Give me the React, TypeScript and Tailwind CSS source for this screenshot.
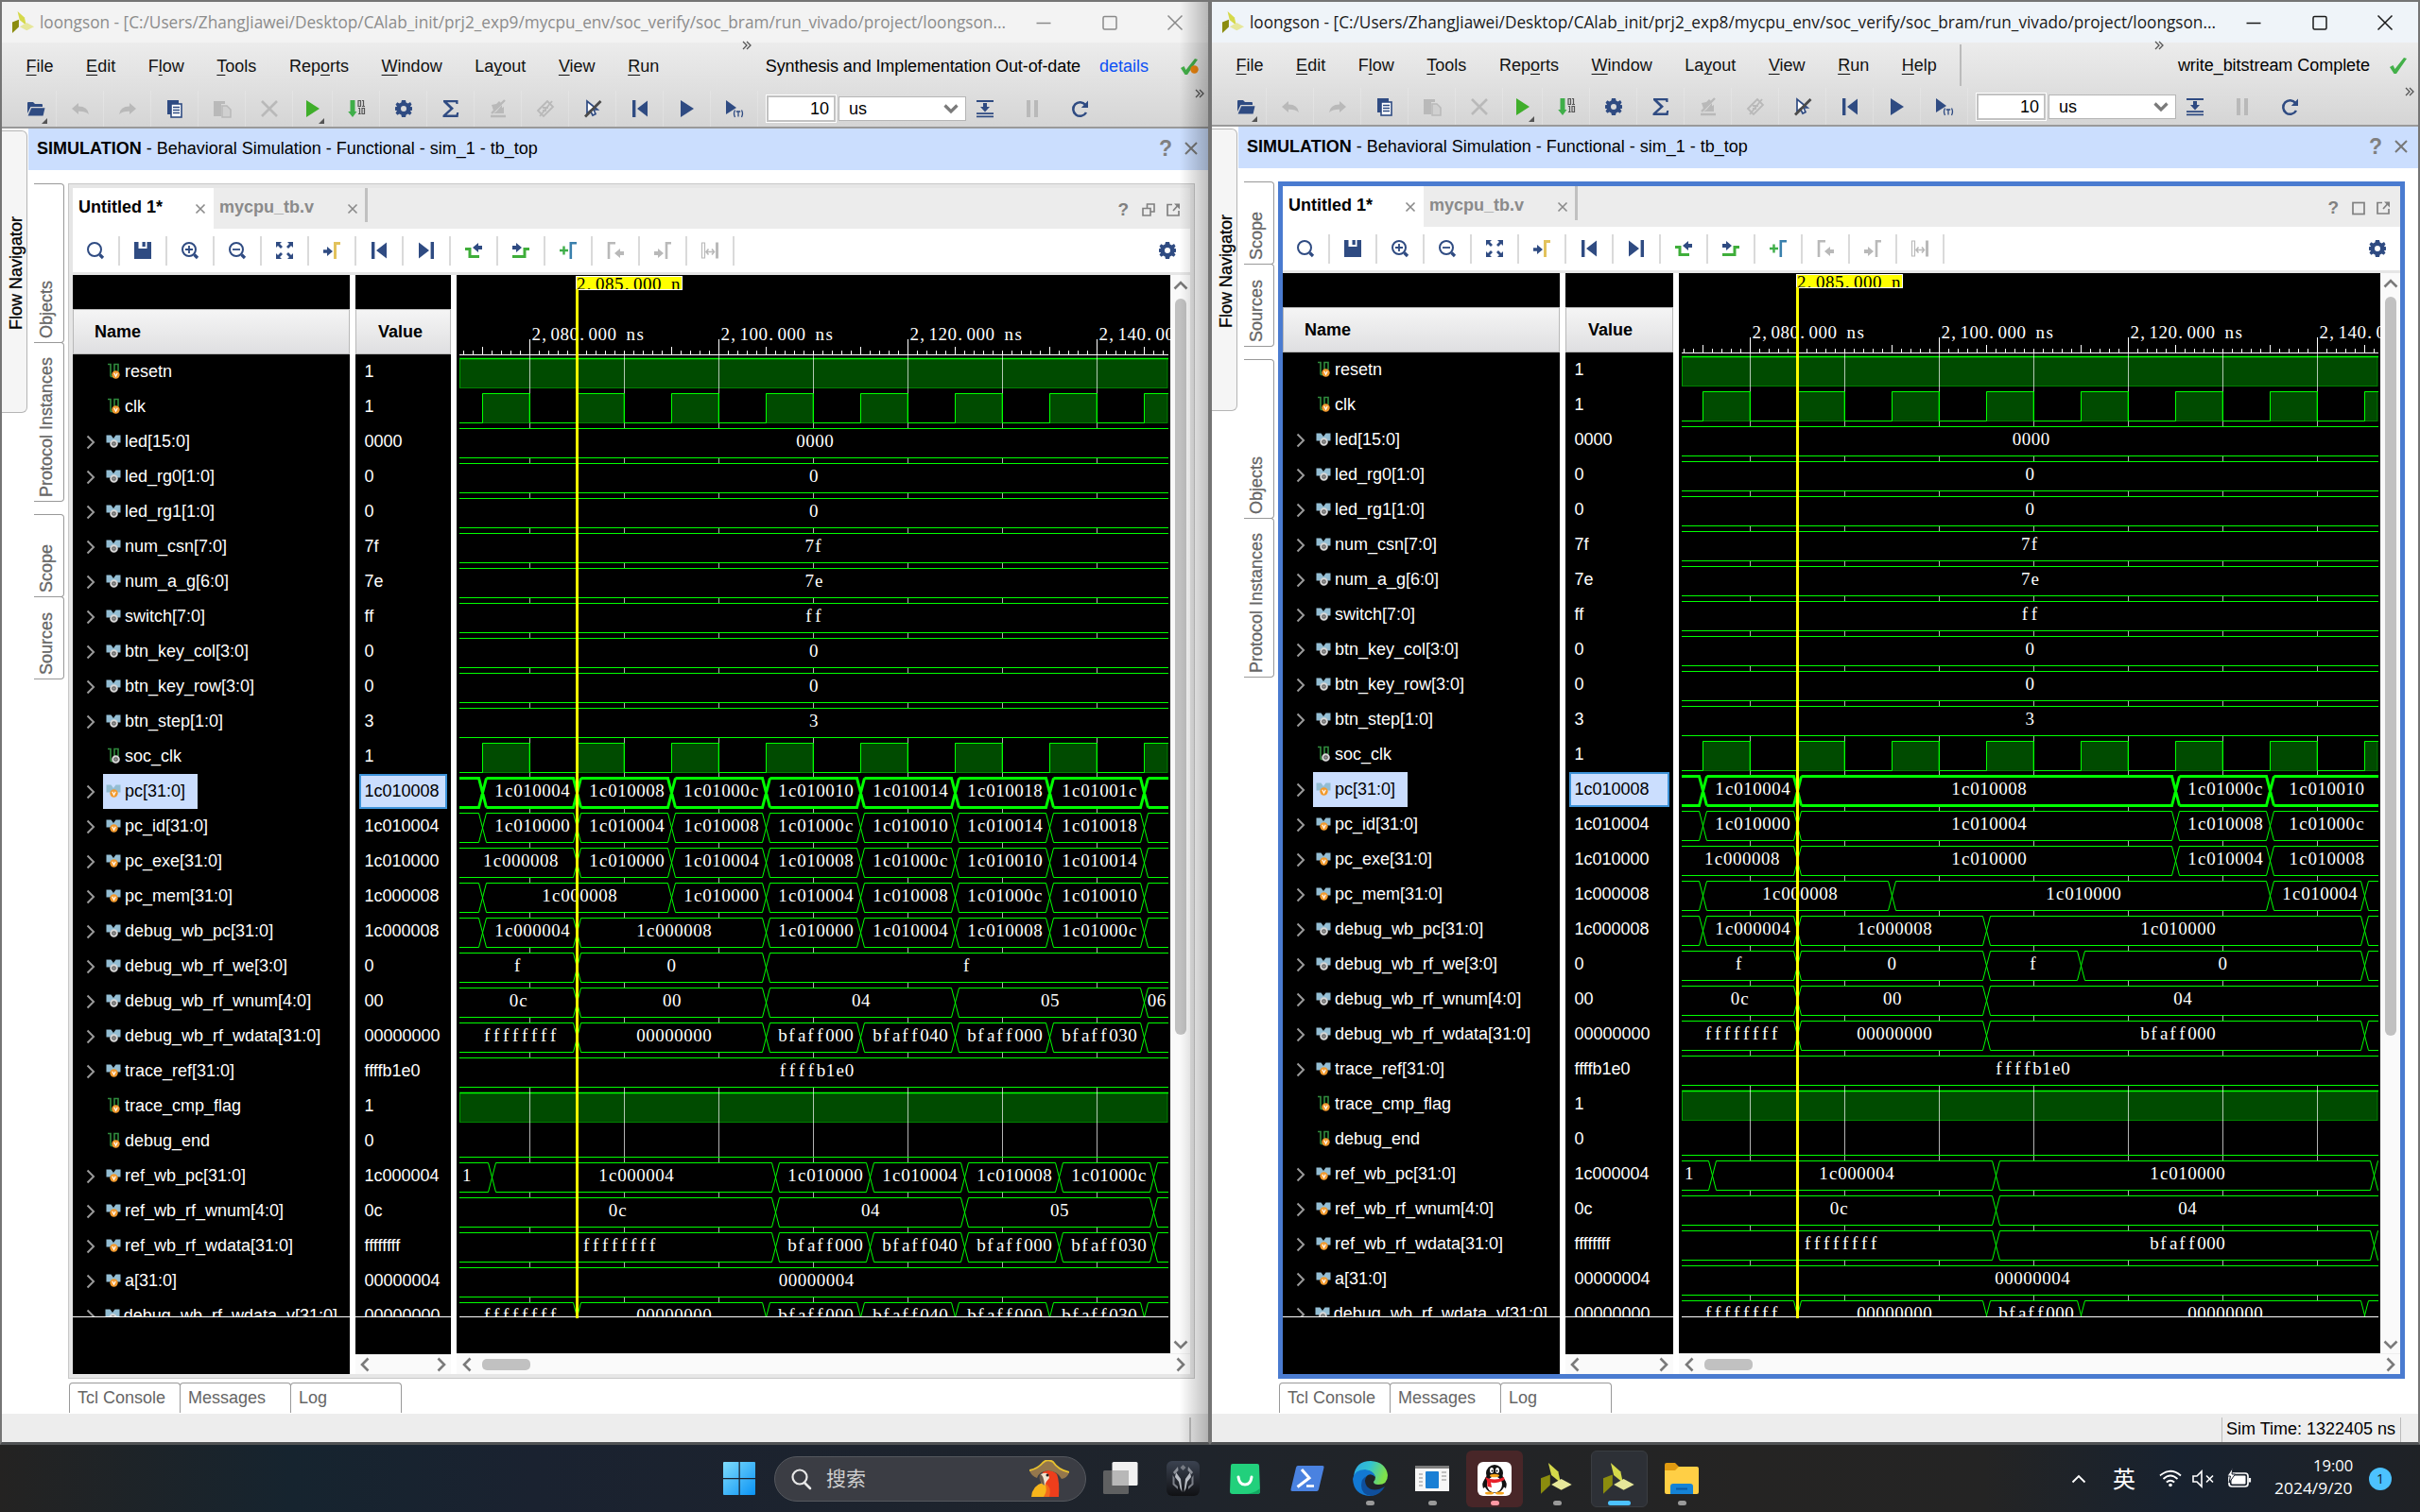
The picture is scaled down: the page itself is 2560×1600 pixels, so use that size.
import React, { useLayoutEffect, useRef, useState } from "react";

const NAVY = "#2f4b82";
const GREY = "#b9b9b9";

/* ---------- text squeezed or stretched to a given width ---------- */

function Fit({ width, className, children }: { width: number; className?: string; children: React.ReactNode }) {
  const ref = useRef<HTMLSpanElement>(null);
  const [scale, setScale] = useState(1);
  useLayoutEffect(() => {
    if (ref.current) setScale(width / ref.current.offsetWidth);
  }, [width]);
  return (
    <span className="block" style={{ width }}>
      <span
        ref={ref}
        className={"inline-block origin-left whitespace-nowrap " + (className ?? "")}
        style={{ transform: `scaleX(${scale})` }}
      >
        {children}
      </span>
    </span>
  );
}

/* ---------- icons ---------- */

function Ico({ children, w = 28, h = 28 }: { children: React.ReactNode; w?: number; h?: number }) {
  return (
    <svg width={w} height={h} viewBox={`${-w / 2} ${-h / 2} ${w} ${h}`} className="block shrink-0 overflow-visible">
      {children}
    </svg>
  );
}

const gearPath =
  "M-2 -9H2L2.6 -6.4L4.6 -5.5L7 -7L8.5 -4.6L6.9 -2.2L9 -1.8V1.8L6.9 2.2L8.5 4.6L6.6 6.8L4.6 5.5L2.6 6.4L2 9H-2L-2.6 6.4L-4.6 5.5L-6.6 6.8L-8.5 4.6L-6.9 2.2L-9 1.8V-1.8L-6.9 -2.2L-8.5 -4.6L-6.6 -6.8L-4.6 -5.5L-2.6 -6.4Z";
const Gear = () => (
  <Ico>
    <path d={gearPath + "M3 0A3 3 0 1 0 -3 0A3 3 0 1 0 3 0Z"} fill={NAVY} fillRule="evenodd" />
  </Ico>
);
const FolderOpen = () => (
  <Ico>
    <path d="M-9 5V-6Q-9 -7 -8 -7H-3L-1 -5H6Q7 -5 7 -4V-2H-5.5Z" fill={NAVY} />
    <path d="M-4.8 -.8H9.5L7.6 7.5H-8.4Z" fill={NAVY} />
    <path d="M12 10V16H6Z" fill="#555" />
  </Ico>
);
const Undo = ({ flip }: { flip?: boolean }) => (
  <Ico>
    <path transform={flip ? "scale(-1 1)" : undefined} d="M-9 0L-2 -6V-2.6Q8 -2.6 9 6Q5 2.6 -2 2.8V6Z" fill={GREY} />
  </Ico>
);
const Copy = () => (
  <Ico>
    <path d="M-8 -9H4V6H-8Z" fill={NAVY} />
    <rect x="-4" y="-5" width="11" height="14" fill="#fff" stroke={NAVY} strokeWidth="1.6" />
    <path d="M-2 -1.5H5M-2 1.5H5M-2 4.5H5" stroke={NAVY} strokeWidth="1.4" />
  </Ico>
);
const Paste = () => (
  <Ico>
    <path d="M-9 -8H3V-5H-1V8H-9Z" fill={GREY} />
    <path d="M0 -3H5L9 1V9H0Z" fill="#d0d0d0" stroke={GREY} strokeWidth="1.5" />
  </Ico>
);
const Cross = () => (
  <Ico>
    <path d="M-8 -8L8 8M8 -8L-8 8" stroke={GREY} strokeWidth="2.6" />
  </Ico>
);
const RunGreen = () => (
  <Ico>
    <path d="M-7 -9L7 0L-7 9Z" fill="#3fae2a" />
    <path d="M12 10V16H6Z" fill="#555" />
  </Ico>
);
const Bits = () => (
  <Ico>
    <path d="M-6.5 -9H-1.5V3H.5L-4 9L-8.8 3H-6.5Z" fill="#3fae49" />
    <path d="M2 -8.5H4.5V-2.5H2ZM6 -8.5H7.5V-2.5M6 -2.5H9M2 -.5H3.5V5.5M2 5.5H4.7M6 -.5H8.5V5.5H6Z" fill="none" stroke="#555" strokeWidth="1.2" />
  </Ico>
);
const Sigma = () => (
  <Ico>
    <path d="M-8 -9H7.5V-5H5.5L5 -6.8H-3.8L3 -.3L-4.5 6.4H5.5L6.2 4H8.2L7.6 9H-8.5V7L-.8 0L-8 -7Z" fill={NAVY} />
  </Ico>
);
const EraseA = () => (
  <Ico>
    <path d="M-7 -4L-2 -5L1 -8L3 -6L-1 -2L-5 2ZM-1 2L4 -4V4H-2Z" fill={GREY} />
    <path d="M-8 8H8M-7 5L7 -9" stroke={GREY} strokeWidth="2.4" />
    <path d="M-5 5L6 -2V5Z" fill={GREY} />
  </Ico>
);
const EraseB = () => (
  <Ico>
    <path d="M-8 2L2 -8L8 -2L-2 8Z" fill="none" stroke={GREY} strokeWidth="1.8" />
    <path d="M-6 8L7 -8M-3 -1H3M-3 2H1" stroke={GREY} strokeWidth="1.8" />
  </Ico>
);
const NoPointer = () => (
  <Ico>
    <path d="M-6 -8V5L-2.5 2L0 7L3 5.5L1 1H5Z" fill="#fff" stroke={NAVY} strokeWidth="1.7" />
    <path d="M-8 8.5L8.5 -8" stroke="#4a4a4a" strokeWidth="2.8" />
  </Ico>
);
const ToStart = () => (
  <Ico>
    <path d="M-8 -9H-4.6V9H-8ZM8 -8.5V8.5L-3 0Z" fill={NAVY} />
  </Ico>
);
const ToEnd = () => (
  <Ico>
    <path d="M8 -9H4.6V9H8ZM-8 -8.5V8.5L3 0Z" fill={NAVY} />
  </Ico>
);
const Play = () => (
  <Ico>
    <path d="M-7 -9L7 0L-7 9Z" fill={NAVY} />
  </Ico>
);
const PlayT = () => (
  <Ico>
    <path d="M-9 -9L2 -1L-9 6Z" fill={NAVY} />
    <path d="M.5 1.5Q-1.5 5 .5 9M7.5 1.5Q9.5 5 7.5 9M1.8 3H6.2M4 3V8.5" fill="none" stroke={NAVY} strokeWidth="1.3" />
  </Ico>
);
const RunFor = () => (
  <Ico>
    <path d="M-9 -8H9" stroke={NAVY} strokeWidth="2" />
    <path d="M-2 -6H2V-2H5L0 3.5L-5 -2H-2Z" fill={NAVY} />
    <path d="M-9 5.2H9M-9 8.4H9" stroke={NAVY} strokeWidth="1.8" />
  </Ico>
);
const Pause = () => (
  <Ico>
    <path d="M-6 -9H-2V9H-6ZM2 -9H6V9H2Z" fill={GREY} />
  </Ico>
);
const Refresh = () => (
  <Ico>
    <path d="M6.3 -4A7.3 7.3 0 1 0 7 4" fill="none" stroke={NAVY} strokeWidth="2.5" />
    <path d="M9 -8.5V-1H1.8Z" fill={NAVY} />
  </Ico>
);
const Mag = ({ sign }: { sign?: "+" | "-" }) => (
  <Ico>
    <circle cx="-1" cy="-1" r="7" fill="none" stroke={NAVY} strokeWidth="2" />
    <path d="M4.5 4.5L8 8" stroke={NAVY} strokeWidth="3.2" />
    {sign && <path d={sign === "+" ? "M-5 -1H3M-1 -5V3" : "M-5 -1H3"} stroke={NAVY} strokeWidth="1.8" />}
  </Ico>
);
const Save = () => (
  <Ico>
    <path d="M-9 -9H-4.5V-2H4.5V-9H9V9H-9Z" fill={NAVY} />
    <path d="M-.5 -9H2.8V-4H-.5Z" fill={NAVY} />
  </Ico>
);
const ZoomFit = () => (
  <Ico>
    <path
      d="M-9 -9H-3L-5 -7L-2 -4L-4 -2L-7 -5L-9 -3ZM9 -9V-3L7 -5L4 -2L2 -4L5 -7L3 -9ZM-9 9V3L-7 5L-4 2L-2 4L-5 7L-3 9ZM9 9H3L5 7L2 4L4 2L7 5L9 3Z"
      fill={NAVY}
    />
  </Ico>
);
const GoCursor = () => (
  <Ico>
    <path d="M-9 -.8H-5V-4L1 1L-5 6V2.8H-9Z" fill={NAVY} />
    <path d="M3.5 9V-7.5H9" fill="none" stroke="#e2c25c" strokeWidth="3" />
  </Ico>
);
const PrevEdge = () => (
  <Ico>
    <path d="M-9 -1.5H-4V6.5H6" fill="none" stroke="#3fae3a" strokeWidth="3" />
    <path d="M9 -5H5V-8L-1 -3L5 2V-1H9Z" fill={NAVY} />
  </Ico>
);
const NextEdge = () => (
  <Ico>
    <path d="M-9 6.5H4V-1.5H9" fill="none" stroke="#3fae3a" strokeWidth="3" />
    <path d="M-9 -5H-5V-8L1 -3L-5 2V-1H-9Z" fill={NAVY} />
  </Ico>
);
const AddMarker = () => (
  <Ico>
    <path d="M-9 0H0M-4.5 -4.5V4.5" stroke="#3fae49" strokeWidth="2.4" />
    <path d="M2.8 9V-7.8H9" fill="none" stroke="#3a80ad" strokeWidth="2.6" />
  </Ico>
);
const PrevMarker = () => (
  <Ico>
    <path d="M-7 9V-7.8H0" fill="none" stroke={GREY} strokeWidth="2.6" />
    <path d="M9 1H5V-2L-1 3L5 8V5H9Z" fill={GREY} />
  </Ico>
);
const NextMarker = () => (
  <Ico>
    <path d="M4 9V-7.8H9" fill="none" stroke={GREY} strokeWidth="2.6" />
    <path d="M-9 1H-5V-2L1 3L-5 8V5H-9Z" fill={GREY} />
  </Ico>
);
const SwapMarker = () => (
  <Ico>
    <path d="M-8.5 -8H-5.5V8H-8.5Z" fill="none" stroke={GREY} strokeWidth="1.2" />
    <path d="M6 -8.5H9V8.500H6Z" fill={GREY} />
    <path d="M-4 1.5H4.5M-1.5 -1.5L-4 1.5L-1.5 4.5M2 -1.5L4.5 1.5L2 4.5" fill="none" stroke={GREY} strokeWidth="1.6" />
  </Ico>
);
const VivadoLogo = ({ size = 26 }: { size?: number }) => (
  <svg width={size} height={size} viewBox="0 0 26 26" className="block shrink-0">
    <path d="M6 0L14 7L16 16L8.5 10Z" fill="#d5d94a" />
    <path d="M0 12.5L7.5 9.5V18L0 25Z" fill="#8b8c0e" />
    <path d="M8.5 17.5L16.5 13L25 17.5L16.5 22Z" fill="#e6e79a" />
  </svg>
);
const Chev = ({ d, c = "#7a7a7a", sw = 2.6 }: { d: "l" | "r" | "u" | "d"; c?: string; sw?: number }) => {
  const paths = { l: "M3.5 -6.5L-3 0L3.5 6.5", r: "M-3.5 -6.5L3 0L-3.5 6.5", u: "M-6.5 3.5L0 -3L6.5 3.5", d: "M-6.5 -3.5L0 3L6.5 -3.5" };
  return (
    <Ico w={16} h={16}>
      <path d={paths[d]} fill="none" stroke={c} strokeWidth={sw} />
    </Ico>
  );
};
const Dbl = () => (
  <Ico w={12} h={12}>
    <path d="M-4 -4L0 0L-4 4M0 -4L4 0L0 4" fill="none" stroke="#555" strokeWidth="1.3" />
  </Ico>
);
const SmallX = ({ s = 4.5, c = "#8a8a8a", sw = 1.6 }: { s?: number; c?: string; sw?: number }) => (
  <Ico w={16} h={16}>
    <path d={`M${-s} ${-s}L${s} ${s}M${s} ${-s}L${-s} ${s}`} stroke={c} strokeWidth={sw} fill="none" />
  </Ico>
);

/* ---------- signals ---------- */

type Kind = "scalar" | "bus";
interface Sig {
  name: string;
  kind: Kind;
  tag: "v" | "o";
  value: string;
}
const S = (name: string, kind: Kind, tag: "v" | "o", value: string): Sig => ({ name, kind, tag, value });
const signals: Sig[] = [
  S("resetn", "scalar", "v", "1"),
  S("clk", "scalar", "v", "1"),
  S("led[15:0]", "bus", "o", "0000"),
  S("led_rg0[1:0]", "bus", "o", "0"),
  S("led_rg1[1:0]", "bus", "o", "0"),
  S("num_csn[7:0]", "bus", "o", "7f"),
  S("num_a_g[6:0]", "bus", "o", "7e"),
  S("switch[7:0]", "bus", "o", "ff"),
  S("btn_key_col[3:0]", "bus", "o", "0"),
  S("btn_key_row[3:0]", "bus", "o", "0"),
  S("btn_step[1:0]", "bus", "o", "3"),
  S("soc_clk", "scalar", "o", "1"),
  S("pc[31:0]", "bus", "v", "1c010008"),
  S("pc_id[31:0]", "bus", "v", "1c010004"),
  S("pc_exe[31:0]", "bus", "v", "1c010000"),
  S("pc_mem[31:0]", "bus", "v", "1c000008"),
  S("debug_wb_pc[31:0]", "bus", "o", "1c000008"),
  S("debug_wb_rf_we[3:0]", "bus", "o", "0"),
  S("debug_wb_rf_wnum[4:0]", "bus", "o", "00"),
  S("debug_wb_rf_wdata[31:0]", "bus", "o", "00000000"),
  S("trace_ref[31:0]", "bus", "v", "ffffb1e0"),
  S("trace_cmp_flag", "scalar", "v", "1"),
  S("debug_end", "scalar", "v", "0"),
  S("ref_wb_pc[31:0]", "bus", "v", "1c000004"),
  S("ref_wb_rf_wnum[4:0]", "bus", "v", "0c"),
  S("ref_wb_rf_wdata[31:0]", "bus", "v", "ffffffff"),
  S("a[31:0]", "bus", "v", "00000004"),
  S("debug_wb_rf_wdata_v[31:0]", "bus", "o", "00000000"),
];
const SELECTED = 12;

/* A trace is "1", "0", "clk", or a list: label, time, label, time, ... label */
type Trace = "1" | "0" | "clk" | (string | number)[];
const fixed: Trace[] = ["1", "clk", ["0000"], ["0"], ["0"], ["7f"], ["7e"], ["ff"], ["0"], ["0"], ["3"], "clk"];
const leftTraces: Trace[] = [
  ...fixed,
  ["", 2075, "1c010004", 2085, "1c010008", 2095, "1c01000c", 2105, "1c010010", 2115, "1c010014", 2125, "1c010018", 2135, "1c01001c", 2145, ""],
  ["", 2075, "1c010000", 2085, "1c010004", 2095, "1c010008", 2105, "1c01000c", 2115, "1c010010", 2125, "1c010014", 2135, "1c010018", 2145, ""],
  ["1c000008", 2085, "1c010000", 2095, "1c010004", 2105, "1c010008", 2115, "1c01000c", 2125, "1c010010", 2135, "1c010014", 2145, ""],
  ["", 2075, "1c000008", 2095, "1c010000", 2105, "1c010004", 2115, "1c010008", 2125, "1c01000c", 2135, "1c010010", 2145, ""],
  ["", 2075, "1c000004", 2085, "1c000008", 2105, "1c010000", 2115, "1c010004", 2125, "1c010008", 2135, "1c01000c", 2145, ""],
  ["f", 2085, "0", 2105, "f"],
  ["0c", 2085, "00", 2105, "04", 2125, "05", 2145, "06"],
  ["ffffffff", 2085, "00000000", 2105, "bfaff000", 2115, "bfaff040", 2125, "bfaff000", 2135, "bfaff030", 2145, ""],
  ["ffffb1e0"],
  "1",
  "0",
  ["1", 2076, "1c000004", 2106, "1c010000", 2116, "1c010004", 2126, "1c010008", 2136, "1c01000c", 2146, ""],
  ["0c", 2106, "04", 2126, "05", 2146, ""],
  ["ffffffff", 2106, "bfaff000", 2116, "bfaff040", 2126, "bfaff000", 2136, "bfaff030", 2146, ""],
  ["00000004"],
  ["ffffffff", 2085, "00000000", 2105, "bfaff000", 2115, "bfaff040", 2125, "bfaff000", 2135, "bfaff030", 2145, ""],
];
const rightTraces: Trace[] = [
  ...fixed,
  ["", 2075, "1c010004", 2085, "1c010008", 2125, "1c01000c", 2135, "1c010010"],
  ["", 2075, "1c010000", 2085, "1c010004", 2125, "1c010008", 2135, "1c01000c"],
  ["1c000008", 2085, "1c010000", 2125, "1c010004", 2135, "1c010008"],
  ["", 2075, "1c000008", 2095, "1c010000", 2135, "1c010004", 2145, ""],
  ["", 2075, "1c000004", 2085, "1c000008", 2105, "1c010000", 2145, ""],
  ["f", 2085, "0", 2105, "f", 2115, "0", 2145, ""],
  ["0c", 2085, "00", 2105, "04"],
  ["ffffffff", 2085, "00000000", 2105, "bfaff000", 2145, ""],
  ["ffffb1e0"],
  "1",
  "0",
  ["1", 2076, "1c000004", 2106, "1c010000", 2146, ""],
  ["0c", 2106, "04"],
  ["ffffffff", 2106, "bfaff000", 2146, ""],
  ["00000004"],
  ["ffffffff", 2085, "00000000", 2105, "bfaff000", 2115, "00000000", 2145, ""],
];

const ROW = 37;
const LIME = "#00ff00";

/* Fixed-pitch label: every character is centred in a 10px cell */
function Mono({ x, y, text, fill = "#fff" }: { x: number; y: number; text: string; fill?: string }) {
  const xs = Array.from(text).map((ch, i) => x + i * 10 + (ch === "," || ch === "." ? 3 : ch === "f" ? 4 : 4.8));
  return (
    <text x={xs.join(" ")} y={y} textAnchor="middle" fontFamily="'Liberation Serif', serif" fontSize="19" fill={fill}>
      {text}
    </text>
  );
}

function Waves({ left, origin, cursor, traces, clipBottom, height, right = 1238 }: { left: number; origin: number; cursor: number; traces: Trace[]; clipBottom: number; height: number; right?: number }) {
  const x0 = left + 3;
  const x1 = 1236;
  const X = (t: number) => Math.round(origin + (t - 2080) * 10) + 0.5;
  const ticks: React.ReactNode[] = [];
  for (let t = 2073; t < 2150; t++) {
    const x = X(t);
    if (x < x0 || x > x1) continue;
    const len = t % 20 === 0 ? 17 : t % 10 === 5 ? 9 : 5;
    ticks.push(<line key={t} x1={x} x2={x} y1={376 - len} y2={376} stroke="#fff" />);
  }
  const grid: number[] = [];
  for (let t = 2080; t <= 2150; t += 10) if (X(t) < x1) grid.push(X(t));

  const levels: React.ReactNode[] = [];
  const shapes: React.ReactNode[] = [];
  const labels: React.ReactNode[] = [];
  traces.forEach((tr, i) => {
    const top = 379.5 + ROW * i;
    const bot = top + 31;
    if (tr === "1") {
      levels.push(
        <g key={i}>
          <rect x={x0 + 0.5} y={top} width={x1 - x0 - 1.5} height={31} fill="#004b00" stroke="#008000" />
          <line x1={x0} x2={x1} y1={top} y2={top} stroke={LIME} strokeWidth="1.5" />
          <line x1={x0 + 0.5} x2={x0 + 0.5} y1={top} y2={bot} stroke="#00a000" />
        </g>
      );
    } else if (tr === "0") {
      shapes.push(<line key={i} x1={x0} x2={x1} y1={bot} y2={bot} stroke={LIME} />);
    } else if (tr === "clk") {
      let d = `M${x0} ${bot}`;
      for (let t = 2075; X(t) < x1; t += 10) {
        const a = X(t);
        const b = Math.min(X(t + 5), x1);
        shapes.push(<rect key={i + "-" + t} x={a} y={top} width={b - a - 1} height={31} fill="#004b00" stroke="#008000" />);
        d += `H${a}V${top}H${b}`;
        if (b < x1) d += `V${bot}`;
      }
      if (X(2145) > x1) d += `H${x1}`;
      shapes.push(<path key={i} d={d} fill="none" stroke={LIME} />);
    } else {
      const sw = i === SELECTED ? 3 : 1;
      let up = `M${x0} ${top}`;
      let dn = `M${x0} ${bot}`;
      let prev = x0;
      tr.forEach((item, k) => {
        if (k % 2 === 1) {
          const x = X(item as number);
          up += `H${x - 4}L${x + 4} ${bot}M${x + 4} ${top}`;
          dn += `H${x - 4}L${x + 4} ${top}M${x + 4} ${bot}`;
          prev = x;
        } else {
          const next = k + 1 < tr.length ? X(tr[k + 1] as number) : x1;
          const s = item as string;
          if (s) labels.push(<Mono key={i + "l" + k} x={s === "1" ? x0 + 3 : (prev + next) / 2 - 4.6 * s.length - 0.4} y={399 + ROW * i} text={s} />);
        }
      });
      up += `H${x1}`;
      dn += `H${x1}`;
      shapes.push(<rect key={i + "bg"} x={x0} y={top} width={x1 - x0} height={31} fill="#000" />);
      shapes.push(<path key={i} d={up + dn} fill="none" stroke={LIME} strokeWidth={sw} />);
    }
  });
  const id = "clip" + left;
  return (
    <svg width={right - left} height={height} viewBox={`${left} 291 ${right - left} ${height}`} className="block bg-black">
      <defs>
        <clipPath id={id}>
          <rect x={left} y={376} width={right - left} height={clipBottom - 376} />
        </clipPath>
        <clipPath id={id + "c"}>
          <rect x={left} y={291} width={right - left} height={15} />
        </clipPath>
      </defs>
      {ticks}
      <line x1={x0} x2={x1} y1={375.5} y2={375.5} stroke="#fff" />
      {[2080, 2100, 2120, 2140].map((t) => (
        <Mono key={t} x={X(t) + 2} y={360} text={`2,${t - 2000 < 100 ? "0" + (t - 2000) : t - 2000}.000 ns`} />
      ))}
      <g clipPath={`url(#${id})`}>
        {levels}
        {grid.map((x) => (
          <line key={x} x1={x} x2={x} y1={376} y2={clipBottom} stroke="#fff" strokeOpacity="0.7" />
        ))}
        {shapes}
        {labels}
      </g>
      <line x1={x0} x2={x1} y1={clipBottom + 0.5} y2={clipBottom + 0.5} stroke="#fff" />
      <rect x={cursor - 0.5} y={292.5} width={112} height={14} fill="#ffff00" stroke="#fff" />
      <g clipPath={`url(#${id}c)`}>
        <Mono x={cursor} y={307} text="2,085.000 n" fill="#000" />
      </g>
      <rect x={cursor - 1} y={306} width={3} height={clipBottom - 304} fill="#ffff00" />
    </svg>
  );
}

function SignalIcon({ kind, tag }: { kind: Kind; tag: "v" | "o" }) {
  const badge =
    tag === "v" ? (
      <>
        <circle cx="8.5" cy="11.5" r="4.2" fill="#f29a2e" />
        <path d="M6.8 9.8L8.5 13.2L10.2 9.8" fill="none" stroke="#fff" strokeWidth="1.2" />
      </>
    ) : (
      <>
        <circle cx="8.5" cy="11.5" r="3.3" fill="#555" stroke="#d8d8d8" strokeWidth="2" />
        <circle cx="8.5" cy="11.5" r="1.2" fill="#999" />
      </>
    );
  return (
    <svg width="17" height="18" viewBox="0 0 17 18" className="block shrink-0 overflow-visible">
      {kind === "bus" ? (
        <>
          <path d="M.5 2.5H5.5L8 6L10.5 2.5H15.5V10.5H12.5A4.5 4.5 0 0 0 4.500 10.500H.5Z" fill="#93bdd3" />
          {badge}
        </>
      ) : (
        <>
          <path d="M2 1.500H5V14.500M9 14.500V1.500H13V9M5 14.500H9" fill="none" stroke="#2f8a3c" strokeWidth="1.600" />
          <g transform="translate(2 1)">{badge}</g>
        </>
      )}
    </svg>
  );
}

/* ---------- window ---------- */

interface WinProps {
  active: boolean;
  title: string;
  titleWidth: number;
  sideTabs: { label: string; h: number; gap?: boolean }[];
  traces: Trace[];
}

const menu: [string, string, string][] = [
  ["", "F", "ile"],
  ["", "E", "dit"],
  ["F", "l", "ow"],
  ["", "T", "ools"],
  ["Rep", "o", "rts"],
  ["", "W", "indow"],
  ["La", "y", "out"],
  ["", "V", "iew"],
  ["", "R", "un"],
];

const mainTools = [<Undo />, <Undo flip />, <Copy />, <Paste />, <Cross />];
const mainTools2 = [<Bits />, <Gear />, <Sigma />, <EraseA />, <EraseB />, <NoPointer />, <ToStart />, <Play />, <PlayT />];
const waveTools = [
  <Mag />, <Save />, <Mag sign="+" />, <Mag sign="-" />, <ZoomFit />, <GoCursor />, <ToStart />, <ToEnd />,
  <PrevEdge />, <NextEdge />, <AddMarker />, <PrevMarker />, <NextMarker />, <SwapMarker />,
];

function ToolCell({ children }: { children: React.ReactNode }) {
  return <div className="flex h-full w-[50px] items-center justify-center border-r border-white/20">{children}</div>;
}

function VText({ children, dark }: { children: React.ReactNode; dark?: boolean }) {
  return (
    <span className={"rotate-180 whitespace-nowrap text-[18px] leading-[20px] [writing-mode:vertical-rl] " + (dark ? "text-black [-webkit-text-stroke:0.3px_#000]" : "text-[#666] [-webkit-text-stroke:0.3px_#666]")}>
      {children}
    </span>
  );
}

function TitleBar({ active, title, titleWidth }: { active: boolean; title: string; titleWidth: number }) {
  const c = active ? "#1a1a1a" : "#8a8a8a";
  return (
    <div className={"flex h-[43px] shrink-0 items-center pl-[11px] " + (active ? "bg-[#eff4f9] text-[#1a1a1a]" : "bg-[#f3f3f3] text-[#8c8c8c]")}>
      <VivadoLogo size={24} />
      <div className="ml-[5px] pb-px">
        <Fit width={titleWidth} className="font-['Open_Sans',sans-serif] text-[17.5px] leading-[26px]">
          {title}
        </Fit>
      </div>
      <div className="ml-auto flex w-[184px] items-center pr-[25px]">
        <Ico w={20} h={20}>
          <path d="M-7.5 .5H7.5" stroke={c} strokeWidth="1.5" />
        </Ico>
        <div className="flex flex-1 justify-center">
          <Ico w={20} h={20}>
            <rect x="-7" y="-6.5" width="14" height="13.5" rx="1.5" fill="none" stroke={c} strokeWidth="1.5" />
          </Ico>
        </div>
        <Ico w={20} h={20}>
          <path d="M-7.5 -7.5L7.5 7.5M7.5 -7.5L-7.5 7.5" stroke={c} strokeWidth="1.5" />
        </Ico>
      </div>
    </div>
  );
}

function HeaderBars({ active }: { active: boolean }) {
  const items = active ? [...menu, ["", "H", "elp"] as [string, string, string]] : menu;
  return (
    <div className={"relative flex shrink-0 flex-col border-b-2 border-[#999] bg-gradient-to-b from-[#ececec] to-[#d5d5d5] text-[#111] " + (active ? "h-[89px]" : "h-[91px]")}>
      <div className={"flex shrink-0 items-center " + (active ? "h-[48px]" : "h-[50px]")}>
        <div className="flex gap-[34.6px] pl-[25.5px]">
          {items.map(([a, b, c]) => (
            <span key={a + b + c} className="whitespace-nowrap">
              {a}
              <span className="underline decoration-1 underline-offset-[3px]">{b}</span>
              {c}
            </span>
          ))}
        </div>
        {active && <div className="ml-[24px] h-[44px] w-[2px] bg-[#bbb]" />}
        <div className="ml-auto flex items-center text-black">
          {active ? (
            <span className="mr-[20px] tracking-[-0.04px]">write_bitstream Complete</span>
          ) : (
            <>
              <span className="mr-[20px] tracking-[-0.1px]">Synthesis and Implementation Out-of-date</span>
              <span className="mr-[33px] text-[#0b50f5]">details</span>
            </>
          )}
          <div className={active ? "mr-[11px]" : "mr-[10px]"}>
            <Ico w={20} h={20}>
              <path d="M-9 2L-5.5 0L-3.5 4L6 -8L9 -7L-2 9H-4.5Z" fill="#43b049" />
              {!active && <circle cx="5.5" cy="3.5" r="4.2" fill="#f0870f" />}
            </Ico>
          </div>
        </div>
      </div>
      <div className={"flex h-[39px] shrink-0 items-center pl-[15px] " + (active ? "" : "pt-px")}>
        <div className="flex h-full w-[43px] items-center justify-center border-r border-white/20">
          <FolderOpen />
        </div>
        {mainTools.map((ic, i) => (
          <ToolCell key={i}>{ic}</ToolCell>
        ))}
        <div className="flex h-full w-[42px] items-center justify-center border-r border-white/20">
          <RunGreen />
        </div>
        {mainTools2.map((ic, i) => (
          <ToolCell key={i}>{ic}</ToolCell>
        ))}
        <div className="ml-[9px] flex h-[28px] w-[73px] items-center justify-end border-2 border-[#c2c2c2] bg-white pr-[5px] text-black outline-1 outline-white">10</div>
        <div className="ml-[3px] flex h-[26px] w-[135px] items-center justify-between border border-[#b5b5b5] bg-white pr-[7px] pl-[10px] text-black">
          us
          <Chev d="d" sw={3.2} />
        </div>
        <div className="flex w-[40px] justify-center">
          <RunFor />
        </div>
        <div className="ml-[5px] flex w-[50px] justify-center">
          <Pause />
        </div>
        <div className="flex w-[50px] justify-center">
          <Refresh />
        </div>
      </div>
      <div className={"absolute -top-[3px] " + (active ? "left-[996px]" : "left-[782px]")}>
        <Dbl />
      </div>
      <div className={"absolute left-[1261px] " + (active ? "top-[46px]" : "top-[48px]")}>
        <Dbl />
      </div>
    </div>
  );
}

function Heading({ children, pad }: { children: React.ReactNode; pad: string }) {
  return (
    <div className={"flex h-[48px] items-center border border-[#b8b8b8] bg-gradient-to-b from-[#f5f5f5] to-[#dfdfe1] pb-px font-bold text-black " + pad}>{children}</div>
  );
}

function Window({ active, title, titleWidth, sideTabs, traces }: WinProps) {
  return (
    <div className="relative flex h-[1529px] w-[1280px] flex-col border-2 border-b-[3px] border-[#757575] border-b-[#505254] bg-white font-['Liberation_Sans',Arial,sans-serif] text-[18px] leading-[22px]">
      <TitleBar active={active} title={title} titleWidth={titleWidth} />
      <HeaderBars active={active} />
      <div className="flex min-h-0 flex-1">
        <div className="w-[28px] shrink-0 pt-[2px]">
          <div className="flex h-[299px] w-[27px] items-end justify-center rounded-r-[6px] border border-l-0 border-[#b5b5b5] bg-[#f5f5f5] pb-[87px] pl-[4px]">
            <VText dark>Flow Navigator</VText>
          </div>
        </div>
        <div className="flex min-w-0 flex-1 flex-col">
          <div className="flex h-[44px] shrink-0 items-center bg-[#cbdefe] pb-[2px] pl-[9px] text-black">
            <span className="whitespace-pre">
              <b>SIMULATION</b> - Behavioral Simulation - Functional - sim_1 - tb_top
            </span>
            <span className="mr-[12px] ml-auto text-[23px] font-bold text-[#808080]">?</span>
            <span className="mr-[10px]">
              <SmallX s={6} c="#777" sw={2} />
            </span>
          </div>
          <div className="flex min-h-0 flex-1">
            <div className="flex w-[42px] shrink-0 flex-col pt-[15px] pl-[6px]">
              {sideTabs.map((t) => (
                <div
                  key={t.label}
                  className={"flex w-[32px] items-end rounded-r-[4px] border border-l-0 border-[#999] pb-[4px] pl-[3px] " + (t.gap ? "mt-[13px]" : "-mt-px")}
                  style={{ height: t.h }}
                >
                  <VText>{t.label}</VText>
                </div>
              ))}
            </div>
            <div className={"mt-[14px] flex w-[1192px] shrink-0 flex-col " + (active ? "border-[5px] border-[#4a7bd0]" : "border border-[#c8c8c8] bg-[#e6e6e6] p-1")}>
              <div className="flex h-[43px] shrink-0 bg-[#ececec] font-bold">
                <div className="flex w-[149px] items-center justify-between bg-white pr-[6px] pb-[3px] pl-[6px] text-black">
                  Untitled 1*
                  <span className="pt-[4px]">
                    <SmallX />
                  </span>
                </div>
                <div className="flex w-[158px] items-center justify-between pr-[3px] pb-[3px] pl-[6px] text-[#8a8a8a]">
                  mycpu_tb.v
                  <span className="pt-[4px]">
                    <SmallX />
                  </span>
                </div>
                <div className="ml-[2px] h-[36px] w-[3px] bg-[#c0c0c0]" />
                <div className="ml-auto flex items-center gap-[6px] pt-[3px] pr-[8px] text-[19px] text-[#808080]">
                  <span className="mr-[5px]">?</span>
                  <Ico w={20} h={20}>
                    {active ? (
                      <rect x="-6" y="-5.5" width="12" height="12" fill="none" stroke="#808080" strokeWidth="1.7" />
                    ) : (
                      <path d="M-6 -1.5H2V6H-6ZM-1.5 -1.5V-6H6V2H2" fill="none" stroke="#808080" strokeWidth="1.6" />
                    )}
                  </Ico>
                  <Ico w={20} h={20}>
                    <path d="M-1 -5.5H-6V6H6V1M0 1L4.5 -4" fill="none" stroke="#808080" strokeWidth="1.7" />
                    <path d="M1 -6.5H7V-.5Z" fill="#808080" />
                  </Ico>
                </div>
              </div>
              <div className="flex h-[46px] shrink-0 items-center bg-white">
                {waveTools.map((ic, i) => (
                  <div key={i} className="flex h-[31px] w-[50px] items-center justify-center border-r-2 border-[#dadada]">
                    {ic}
                  </div>
                ))}
                <span className="mr-[10px] ml-auto">
                  <Gear />
                </span>
              </div>
              <div className="h-[3px] shrink-0 bg-[#e6e6e6]" />
              <div className="flex min-h-0 flex-1 bg-white">
                <div className="flex w-[293px] flex-col bg-black">
                  <div className="h-[36px] shrink-0" />
                  <Heading pad="pl-[22px]">Name</Heading>
                  <div className={"shrink-0 overflow-hidden border-b border-white " + (active ? "h-[1021px]" : "h-[1019px]")}>
                    {signals.map((s, i) => (
                      <div key={s.name} className="flex h-[37px] items-center pl-[11px] text-white">
                        <span className="w-[21px]">{s.kind === "bus" && <Chev d="r" c="#9a9a9a" sw={2} />}</span>
                        <div className={"flex h-[37px] items-center pr-[13px] pb-px pl-[3px] whitespace-nowrap " + (i === SELECTED ? "bg-[#cbdefe] text-black" : "")}>
                          <SignalIcon kind={s.kind} tag={s.tag} />
                          <span className="ml-[3px]">{s.name}</span>
                        </div>
                      </div>
                    ))}
                  </div>
                </div>
                <div className={"ml-[6px] flex flex-col bg-black " + (active ? "w-[114px]" : "w-[101px]")}>
                  <div className="h-[36px] shrink-0" />
                  <Heading pad="pl-[23px]">Value</Heading>
                  <div className={"shrink-0 overflow-hidden border-b border-white " + (active ? "h-[1021px]" : "h-[1019px]")}>
                    {signals.map((s, i) => (
                      <div
                        key={s.name}
                        className={"mx-[4px] flex h-[37px] items-center pb-px " + (i === SELECTED ? "border-2 border-[#3d92d8] bg-[#cbdefe] pl-[3.5px] text-black" : "pl-[5.5px] text-white")}
                      >
                        {s.value}
                      </div>
                    ))}
                  </div>
                  <div className="mt-auto flex h-[21px] shrink-0 items-center justify-between border-t border-[#eee] bg-[#fafafa] px-[2px]">
                    <Chev d="l" />
                    <Chev d="r" />
                  </div>
                </div>
                <div className="ml-[6px] flex flex-1 flex-col">
                  <div className="flex min-h-0 flex-1">
                    <Waves
                      left={active ? 496 : 483}
                      origin={active ? 571 : 560}
                      cursor={active ? 621 : 610}
                      traces={traces}
                      clipBottom={active ? 1395 : 1393}
                      height={active ? 1143 : 1141}
                    />
                    <div className="flex w-[21px] flex-col items-center bg-[#fafafa] pt-[3px]">
                      <Chev d="u" />
                      <div className={"mt-[6px] w-[12px] rounded-full bg-[#c1c1c1] " + (active ? "h-[782px]" : "h-[779px]")} />
                      <div className="mt-auto pb-px">
                        <Chev d="d" />
                      </div>
                    </div>
                  </div>
                  <div className="flex h-[22px] shrink-0 items-center border-t border-[#eee] bg-[#fafafa] pr-[2px] pl-[3px]">
                    <Chev d="l" />
                    <div className="ml-[8px] h-[12px] w-[51px] rounded-[5px] bg-[#c1c1c1]" />
                    <span className="ml-auto">
                      <Chev d="r" />
                    </span>
                  </div>
                </div>
              </div>
            </div>
          </div>
          <div className="mt-[4px] flex h-[33px] shrink-0 pl-[43px] text-[#666]">
            {["Tcl Console", "Messages", "Log"].map((t, i) => (
              <div key={t} className={"flex h-[32px] w-[118px] items-center rounded-t-[4px] border border-b-0 border-[#999] pb-px pl-[8px] " + (i ? "-ml-px" : "")}>
                {t}
              </div>
            ))}
          </div>
        </div>
      </div>
      <div className="flex h-[30px] shrink-0 justify-end bg-[#ededed] pt-[4px] pr-[18px]">
        {active ? (
          <div className="flex w-[190px] items-center border-x border-[#bbb] pb-[3px] pl-[4px] whitespace-nowrap text-black">Sim Time: 1322405 ns</div>
        ) : (
          <div className="w-[2px] bg-[#bdbdbd]" />
        )}
      </div>
      {!active && <div className="pointer-events-none absolute top-0 right-0 bottom-0 w-[30px] bg-gradient-to-r from-transparent to-black/25" />}
    </div>
  );
}

/* ---------- taskbar ---------- */

function Task({ children, dot, box }: { children: React.ReactNode; dot?: string; box?: string }) {
  return (
    <div className="relative flex h-[71px] w-[66px] shrink-0 items-center justify-center">
      <div className={"flex h-[60px] w-[60px] items-center justify-center rounded-[6px] " + (box ?? "")}>{children}</div>
      {dot && <div className={"absolute bottom-[7px] h-[5px] rounded-full " + dot} />}
    </div>
  );
}

function Taskbar() {
  return (
    <div className="flex h-[71px] items-center bg-[linear-gradient(90deg,#242322_0%,#16242f_12%,#1a2230_22%,#1f242b_50%,#252423_72%,#242424_82%,#18222f_90%,#1f2226_100%)] pl-[749px] font-['Open_Sans',sans-serif] text-white">
      <Task>
        <svg width="34" height="35" viewBox="0 0 34 35">
          <defs>
            <linearGradient id="win" x1="0" y1="0" x2="1" y2="1">
              <stop offset="0" stopColor="#7fdcfb" />
              <stop offset="1" stopColor="#0a93f5" />
            </linearGradient>
          </defs>
          <path d="M0 1Q0 0 1 0H16.5V17H0ZM17.8 0H33Q34 0 34 1V17H17.8ZM0 18.3H16.5V35H1Q0 35 0 34ZM17.8 18.3H34V34Q34 35 33 35H17.8Z" fill="url(#win)" />
        </svg>
      </Task>
      <div className="mr-[3px] ml-[4px] flex h-[48px] w-[330px] items-center rounded-full border border-[#55585e] bg-[#3b3d44] pr-[17px] pl-[15px]">
        <Ico w={24} h={24}>
          <circle cx="-1" cy="-2" r="7.5" fill="none" stroke="#e8e8e8" strokeWidth="2.2" />
          <path d="M4 4L10 10" stroke="#e8e8e8" strokeWidth="2.6" strokeLinecap="round" />
        </Ico>
        <span className="ml-[15px] pb-[2px] font-['Noto_Sans_CJK_SC',sans-serif] text-[21px] text-[#cfcfcf]">搜索</span>
        <svg width="42" height="40" viewBox="0 0 42 40" className="ml-auto">
          <path d="M14 13Q22 8 29 15Q32 22 31 39H14Q12 25 14 13Z" fill="#ee3e1c" />
          <path d="M2 39Q3 27 14 24Q22 27 20 39Z" fill="#f7b51b" />
          <path d="M16 24Q24 28 21 39H15Q20 32 16 24Z" fill="#f26a1b" />
          <path d="M12 15Q20 11 21 19Q18 22 16 27Q10 24 12 15Z" fill="#f2e3cf" />
          <path d="M11 15Q15 15 16 27Q9 23 11 15Z" fill="#6d5b4c" />
          <circle cx="19" cy="16" r="1.5" fill="#222" />
          <path d="M0 11Q9 9 14 3Q19 -2 25 2Q30 10 42 13Q40 19 34 20Q30 12 20 11Q10 12 8 19Q2 17 0 11Z" fill="#94774c" />
          <path d="M0 11Q9 9 14 3Q19 -2 25 2Q30 10 42 13" fill="none" stroke="#e8c22e" strokeWidth="1.8" />
        </svg>
      </div>
      <Task>
        <svg width="37" height="35" viewBox="0 0 37 35">
          <rect x="9.5" y="0" width="27" height="25" rx="1.5" fill="#f1f1f1" />
          <rect x="0" y="9" width="27" height="25" rx="1.5" fill="#6b6b6b" fillOpacity="0.85" />
          <rect x="9.5" y="9" width="17.5" height="16" fill="#b8b8b8" />
        </svg>
      </Task>
      <Task>
        <svg width="35" height="37" viewBox="0 0 35 37">
          <defs>
            <linearGradient id="aw" x1="0" y1="0" x2="0" y2="1">
              <stop offset="0" stopColor="#3b4250" />
              <stop offset="1" stopColor="#101114" />
            </linearGradient>
          </defs>
          <rect width="35" height="37" rx="6" fill="url(#aw)" />
          <path d="M17.5 4L20.5 7L17.500 10L14.500 7Z" fill="#777b83" />
          <path d="M12 6L7 12L8.500 14L12.500 10ZM23 6L28 12L26.500 14L22.500 10Z" fill="#8d9199" />
          <path d="M10 12L15 19L16.500 33L14.500 29L13 22L9 17ZM25 12L20 19L18.500 33L20.500 29L22 22L26 17Z" fill="#b9bdc4" />
          <path d="M6.500 15L8.500 18V24L12 27V30L6.500 25ZM28.500 15L26.500 18V24L23 27V30L28.500 25Z" fill="#7b7f87" />
        </svg>
      </Task>
      <Task>
        <svg width="32" height="32" viewBox="0 0 32 32">
          <path d="M3 0H29Q31 0 31 2L32 29Q32 32 29 32H3Q0 32 0 29L1 2Q1 0 3 0Z" fill="#22d07c" />
          <path d="M32 26V29Q32 32 29 32H14Q25 32 32 26Z" fill="#12a862" />
          <path d="M9 14Q10 22 16 22Q22 22 23 14" fill="none" stroke="#fff" strokeWidth="3" strokeLinecap="round" />
        </svg>
      </Task>
      <Task>
        <svg width="36" height="27" viewBox="0 0 36 27">
          <path d="M8 0H34Q36 0 35.5 2L30 25Q29.500 27 28 27H2Q0 27 .5 25L6 2Q6.500 0 8 0Z" fill="#4a82e0" />
          <path d="M12 4L20 13L7.500 22.500" fill="none" stroke="#fff" strokeWidth="3" />
          <path d="M17 21.500H25" stroke="#fff" strokeWidth="2.600" />
        </svg>
      </Task>
      <Task dot="w-[9px] bg-[#9a9a9a]">
        <svg width="37" height="37" viewBox="0 0 37 37">
          <defs>
            <linearGradient id="e1" x1="0" y1="0" x2="1" y2="0.3">
              <stop offset="0" stopColor="#2ba6e6" />
              <stop offset="0.5" stopColor="#33c3d0" />
              <stop offset="1" stopColor="#7fe04a" />
            </linearGradient>
          </defs>
          <path d="M1 16Q3 0 19 0Q35 1 37 15Q37 25 27 25Q22 25 22 22Q24 20 24 17Q22 11 15 10Q5 10 1 16Z" fill="url(#e1)" />
          <path d="M0 19Q2 9 13 9Q22 10 24 17Q20 13 16 15Q11 18 13 25Q16 34 27 34Q23 37 18 37Q1 36 0 19Z" fill="#1279d3" />
          <path d="M15 16Q11 20 15 27Q22 34 34 27Q29 36 20 37Q9 36 9 26Q9 18 15 16Z" fill="#0f4f9c" />
        </svg>
      </Task>
      <Task dot="w-[9px] bg-[#9a9a9a]">
        <svg width="36" height="27" viewBox="0 0 36 27">
          <rect width="36" height="27" fill="#f6f6f6" />
          <rect width="36" height="3" fill="#7d7d7d" />
          <rect x="11" y="6" width="14" height="18" rx="1" fill="#1a7fd4" />
          <path d="M4 9H8M4 13H8M4 17H8M4 21H8M28 7H33M28 11H33M28 15H33" stroke="#c0c0c0" strokeWidth="2" />
        </svg>
      </Task>
      <Task dot="w-[9px] bg-[#ff99a4]" box="bg-[#482628]">
        <svg width="36" height="36" viewBox="0 0 36 36">
          <rect width="36" height="36" rx="6" fill="#fff" />
          <ellipse cx="18" cy="22" rx="11" ry="11" fill="#111" />
          <path d="M8 18Q4 22 6 28L10 25ZM28 18Q32 22 30 28L26 25Z" fill="#111" />
          <ellipse cx="18" cy="12" rx="9" ry="9" fill="#111" />
          <ellipse cx="18" cy="24" rx="8" ry="8.5" fill="#fff" />
          <ellipse cx="15" cy="9" rx="2" ry="3" fill="#fff" />
          <ellipse cx="21" cy="9" rx="2" ry="3" fill="#fff" />
          <circle cx="15.5" cy="9.5" r="0.9" />
          <circle cx="20.5" cy="9.5" r="0.9" />
          <ellipse cx="18" cy="14.5" rx="5" ry="1.8" fill="#f5a31a" />
          <path d="M8 16Q18 21 28 16L28.500 19Q18 24 14 21.500L15 27L10.500 26L10 20Z" fill="#e8202a" />
          <ellipse cx="12.5" cy="33" rx="4.5" ry="1.5" fill="#f5a31a" />
          <ellipse cx="23.5" cy="33" rx="4.5" ry="1.5" fill="#f5a31a" />
        </svg>
      </Task>
      <Task dot="w-[9px] bg-[#9a9a9a]">
        <VivadoLogo size={34} />
      </Task>
      <Task dot="w-[24px] bg-[#4cc2ff]" box="border border-[#3a3d42] bg-[#2d3036]">
        <VivadoLogo size={34} />
      </Task>
      <Task dot="w-[9px] bg-[#9a9a9a]">
        <svg width="36" height="33" viewBox="0 0 36 33">
          <path d="M0 2Q0 0 2 0H11L15 4V10H0Z" fill="#e09a10" />
          <path d="M0 8H11L15 4H34Q36 4 36 6V31Q36 33 34 33H2Q0 33 0 31Z" fill="#ffcf45" />
          <path d="M6 33V25Q6 22 9 22H27Q30 22 30 25V33Z" fill="#1583d6" />
          <path d="M12 27.500H24" stroke="#0b5aa6" strokeWidth="2" />
        </svg>
      </Task>
      <div className="ml-auto flex items-center pr-[30px]">
        <Chev d="u" c="#fff" sw={1.8} />
        <span className="ml-[28px] pb-[2px] font-['Noto_Sans_CJK_SC',sans-serif] text-[24px] leading-[30px]">英</span>
        <div className="ml-[24px]">
          <Ico w={26} h={26}>
            <path d="M-11 -3.5Q0 -13 11 -3.5M-7.5 0Q0 -7 7.5 0M-4.2 3.5Q0 0 4.2 3.5" fill="none" stroke="#fff" strokeWidth="1.8" />
            <circle cx="0" cy="6.5" r="1.8" fill="#fff" />
          </Ico>
        </div>
        <div className="ml-[10px]">
          <Ico w={24} h={24}>
            <path d="M-11 -3H-7L-2 -8V8L-7 3H-11Z" fill="none" stroke="#fff" strokeWidth="1.6" />
            <path d="M3 -3.5L10 3.5M10 -3.5L3 3.5" stroke="#fff" strokeWidth="1.6" />
          </Ico>
        </div>
        <div className="ml-[12px]">
          <Ico w={26} h={24}>
            <rect x="-10" y="-6" width="20" height="14" rx="3" fill="none" stroke="#fff" strokeWidth="1.7" />
            <rect x="-7.5" y="-3.500" width="15" height="9" rx="1" fill="#fff" />
            <path d="M12 -1V3.500" stroke="#fff" strokeWidth="2.200" />
            <path d="M-6 -12L-12 -3H-8.500L-10 4L-3.500 -5H-7Z" fill="#fff" stroke="#1b2230" strokeWidth="1" />
          </Ico>
        </div>
        <div className="ml-[25px] flex flex-col items-end pb-[3px] text-[17px] leading-[24px]">
          <Fit width={42}>19:00</Fit>
          <Fit width={83}>2024/9/20</Fit>
        </div>
        <span className="ml-[17px] flex h-[24px] w-[24px] items-center justify-center rounded-full bg-[#4cc2ff] text-[14px] text-[#10202c]">1</span>
      </div>
    </div>
  );
}

export default function App() {
  return (
    <div className="flex h-[1600px] w-[2560px] flex-col overflow-hidden bg-white">
      <div className="flex">
        <Window
          active={false}
          title="loongson - [C:/Users/ZhangJiawei/Desktop/CAlab_init/prj2_exp9/mycpu_env/soc_verify/soc_bram/run_vivado/project/loongson..."
          titleWidth={1022}
          sideTabs={[
            { label: "Objects", h: 169 },
            { label: "Protocol Instances", h: 169 },
            { label: "Scope", h: 88, gap: true },
            { label: "Sources", h: 88 },
          ]}
          traces={leftTraces}
        />
        <Window
          active
          title="loongson - [C:/Users/ZhangJiawei/Desktop/CAlab_init/prj2_exp8/mycpu_env/soc_verify/soc_bram/run_vivado/project/loongson..."
          titleWidth={1022}
          sideTabs={[
            { label: "Scope", h: 88 },
            { label: "Sources", h: 88 },
            { label: "Objects", h: 169, gap: true },
            { label: "Protocol Instances", h: 169 },
          ]}
          traces={rightTraces}
        />
      </div>
      <Taskbar />
    </div>
  );
}
